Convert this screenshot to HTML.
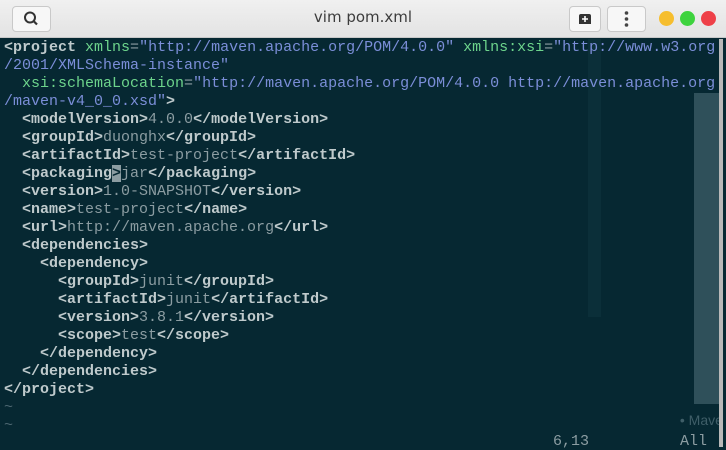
<!DOCTYPE html>
<html><head><style>
html,body{margin:0;padding:0;width:726px;height:447px;overflow:hidden;background:#062832;}
#tb{position:absolute;left:0;top:0;width:726px;height:37px;background:linear-gradient(#f0f0f0,#e3e3e3);border-bottom:1px solid #c8c8c8;font-family:"DejaVu Sans","Liberation Sans",sans-serif;}
.btn{position:absolute;top:6px;height:24px;border:1px solid #c9c9c9;border-radius:4px;background:#f7f7f7;}
.c{position:absolute;top:11px;width:15px;height:15px;border-radius:50%;}
#title{position:absolute;left:0;width:726px;top:8px;text-align:center;font-size:15px;color:#3c3c3c;}
pre{position:absolute;left:4px;top:39px;margin:0;font-family:"Liberation Mono",monospace;font-size:15px;line-height:18px;color:#8c9da2;}
.t{color:#bfcacc;font-weight:bold;}
.a{color:#6dd48c;}
.s{color:#7b8ed8;}
.tl{color:#4c6670;}
</style></head><body>
<div style="position:absolute;left:588px;top:39px;width:13px;height:278px;background:#0b2f39"></div>
<div style="position:absolute;left:694px;top:93px;width:25px;height:311px;background:#2f505a"></div>
<div style="position:absolute;left:719px;top:39px;width:4px;height:408px;background:#b8b8b8"></div>
<div style="position:absolute;left:676px;top:412px;width:43px;overflow:hidden;white-space:nowrap;font:14px 'Liberation Sans',sans-serif;color:#3f5e68">&nbsp;• Mave</div>
<div id="tb">
<div class="btn" style="left:12px;width:37px"><svg width="37" height="24"><circle cx="17" cy="10.5" r="5" fill="none" stroke="#333" stroke-width="2"/><line x1="20.5" y1="14" x2="24" y2="17.5" stroke="#333" stroke-width="2.2"/></svg></div>
<div id="title">vim pom.xml</div>
<div class="btn" style="left:569px;width:30px"><svg width="30" height="24"><path d="M9 17V9a2 2 0 0 1 2-2h8a2 2 0 0 1 2 2v8z" fill="#333"/><path d="M15 9v6M12 12h6" stroke="#fff" stroke-width="1.6"/></svg></div>
<div class="btn" style="left:607px;width:37px"><svg width="37" height="24"><circle cx="18.5" cy="6" r="1.8" fill="#444"/><circle cx="18.5" cy="12" r="1.8" fill="#444"/><circle cx="18.5" cy="18" r="1.8" fill="#444"/></svg></div>
<div class="c" style="left:659px;background:#f6be2e"></div>
<div class="c" style="left:680px;background:#3ed33e"></div>
<div class="c" style="left:701px;background:#ee4048"></div>
</div>
<pre><span class="t">&lt;project</span> <span class="a">xmlns</span>=<span class="s">"http://maven.apache.org/POM/4.0.0"</span> <span class="a">xmlns:xsi</span>=<span class="s">"http://www.w3.org</span>
<span class="s">/2001/XMLSchema-instance"</span>
  <span class="a">xsi:schemaLocation</span>=<span class="s">"http://maven.apache.org/POM/4.0.0 http://maven.apache.org</span>
<span class="s">/maven-v4_0_0.xsd"</span><span class="t">&gt;</span>
  <span class="t">&lt;modelVersion&gt;</span>4.0.0<span class="t">&lt;/modelVersion&gt;</span>
  <span class="t">&lt;groupId&gt;</span>duonghx<span class="t">&lt;/groupId&gt;</span>
  <span class="t">&lt;artifactId&gt;</span>test-project<span class="t">&lt;/artifactId&gt;</span>
  <span class="t">&lt;packaging</span><span style="background:#8c9da2;color:#062832;font-weight:bold">&gt;</span>jar<span class="t">&lt;/packaging&gt;</span>
  <span class="t">&lt;version&gt;</span>1.0-SNAPSHOT<span class="t">&lt;/version&gt;</span>
  <span class="t">&lt;name&gt;</span>test-project<span class="t">&lt;/name&gt;</span>
  <span class="t">&lt;url&gt;</span>http://maven.apache.org<span class="t">&lt;/url&gt;</span>
  <span class="t">&lt;dependencies&gt;</span>
    <span class="t">&lt;dependency&gt;</span>
      <span class="t">&lt;groupId&gt;</span>junit<span class="t">&lt;/groupId&gt;</span>
      <span class="t">&lt;artifactId&gt;</span>junit<span class="t">&lt;/artifactId&gt;</span>
      <span class="t">&lt;version&gt;</span>3.8.1<span class="t">&lt;/version&gt;</span>
      <span class="t">&lt;scope&gt;</span>test<span class="t">&lt;/scope&gt;</span>
    <span class="t">&lt;/dependency&gt;</span>
  <span class="t">&lt;/dependencies&gt;</span>
<span class="t">&lt;/project&gt;</span>
<span class="tl">~</span>
<span class="tl">~</span>
</pre>
<div style="position:absolute;left:553px;top:433px;font:15px 'Liberation Mono',monospace;color:#8c9da2">6,13</div>
<div style="position:absolute;left:680px;top:433px;font:15px 'Liberation Mono',monospace;color:#8c9da2">All</div>
</body></html>
